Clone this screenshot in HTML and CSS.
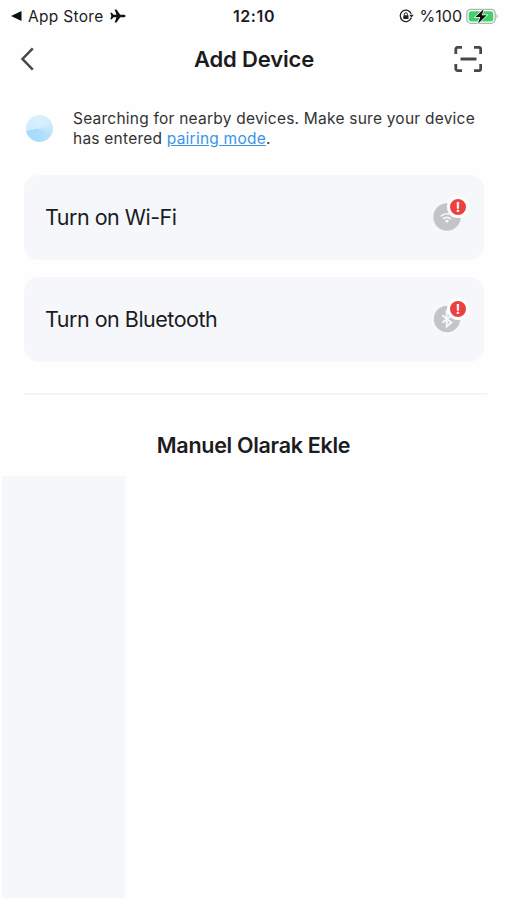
FILE: index.html
```html
<!DOCTYPE html>
<html lang="en">
<head>
    <meta charset="UTF-8">
    <meta name="viewport" content="width=device-width, initial-scale=1.0">
    <title>Add Device</title>
    <link rel="stylesheet" href="styles.css">
</head>
<body>

<div class="status-bar">
    <div class="status-left">
        <svg width="11" height="10" viewBox="0 0 11 10"><path d="M0 5L10.5 0v10z" fill="#111"/></svg>
        <span class="back-app">App Store</span>
        <svg class="plane" width="16" height="14" viewBox="0 0 16 14"><path d="M15.600 7c0-.8-1.200-1.300-2.200-1.300H10.200L6.500.6H4.700l1.800 5.100H3.500L1.900 3.700H.4l.9 3.300-.9 3.300h1.500l1.600-2h3l-1.800 5.100h1.800l3.700-5.100h3.200c1 0 2.200-.5 2.200-1.300z" fill="#111"/></svg>
    </div>
    <span class="time">12:10</span>
    <div class="status-right">
        <svg class="lock" width="15" height="14" viewBox="0 0 15 14">
            <path d="M12.300 8.800A5.700 5.700 0 1 1 12.300 4.900" fill="none" stroke="#222" stroke-width="1.300"/>
            <path d="M10.300 5.700h4.300l-2.100 3z" fill="#222"/>
            <rect x="4.300" y="6.200" width="5.200" height="3.900" rx=".6" fill="#222"/>
            <path d="M5.400 6.500V5.200a1.500 1.500 0 0 1 3 0v1.300" fill="none" stroke="#222"/>
        </svg>
        <span class="percent">%100</span>
        <svg width="33" height="17" viewBox="0 0 33 17">
            <rect x=".8" y="1.300" width="28.400" height="14" rx="4.300" fill="#fff" stroke="#b2b2b2" stroke-width="1.300"/>
            <rect x="2.700" y="3.200" width="24.600" height="10.200" rx="2.600" fill="#3fd268"/>
            <path d="M30.600 6.200c1.500.5 1.500 3.700 0 4.200z" fill="#aaa"/>
            <path d="M17.800 1L9.300 9.100h4.900L12 15.700l8.800-8.400h-5z" fill="#111" stroke="#fff" stroke-width="1.400" paint-order="stroke"/>
        </svg>
    </div>
</div>

<div class="header">
    <svg width="14" height="24" viewBox="0 0 14 24"><path d="M12.800 1.300L2.500 12l10.300 10.700" fill="none" stroke="#484848" stroke-width="2.500"/></svg>
    <h1>Add Device</h1>
    <svg width="28" height="26" viewBox="0 0 28 26">
        <path d="M1.800 8V3.300a2 2 0 0 1 2-2H8M20 1.300h4.700a2 2 0 0 1 2 2V8M26.700 18v4.700a2 2 0 0 1-2 2H20M8 24.700H3.800a2 2 0 0 1-2-2V18M6.500 13h16" fill="none" stroke="#484848" stroke-width="2.800"/>
    </svg>
</div>

<div class="notice">
    <div class="radar"></div>
    <p>Searching for nearby devices. Make sure your device<br>has entered <a href="#">pairing mode</a>.</p>
</div>

<div class="cards">
    <div class="card">
        <span>Turn on Wi-Fi</span>
        <div class="icon">
            <svg width="28" height="28" viewBox="0 0 28 28">
                <circle cx="14" cy="14" r="13.700" fill="#c3c4c7"/>
                <path d="M7.800 13.300a8.800 8.800 0 0 1 12.400 0M10.200 16a5.400 5.400 0 0 1 7.600 0" fill="none" stroke="#f5f7fb" stroke-width="1.700"/>
                <path d="M11.900 17.700a3 3 0 0 1 4.200 0L14 20z" fill="#f5f7fb"/>
            </svg>
            <span class="badge">!</span>
        </div>
    </div>
    <div class="card">
        <span>Turn on Bluetooth</span>
        <div class="icon">
            <svg width="28" height="28" viewBox="0 0 28 28">
                <circle cx="14" cy="14" r="13.200" fill="#c3c4c7"/>
                <path d="M9.300 10.300l9 7.300-4.600 4V6.400l4.600 4-9 7.300" fill="none" stroke="#f5f7fb" stroke-width="2"/>
            </svg>
            <span class="badge">!</span>
        </div>
    </div>
</div>

<div class="divider"></div>

<h2>Manuel Olarak Ekle</h2>
<div class="sidebar"></div>

</body>
</html>
```

FILE: styles.css
```css
* {
    box-sizing: border-box;
}
body {
    font-family: Inter, 'Liberation Sans', sans-serif;
    margin: 0;
    height: 900px;
    background: #fefefe;
    color: #1c1c1e;
    overflow: hidden;
}
svg {
    display: block;
    flex-shrink: 0;
}
.status-bar {
    display: grid;
    grid-template-columns: 1fr auto 1fr;
    align-items: center;
    height: 32px;
    padding: 0 8px 0 11px;
    font-size: 16px;
    white-space: nowrap;
}
.status-left, .status-right {
    display: flex;
    align-items: center;
}
.status-right {
    justify-content: flex-end;
}
.back-app {
    margin-left: 6px;
    font-size: 15.5px;
    letter-spacing: 0.3px;
}
.plane {
    margin-left: 6px;
}
.time {
    font-size: 16px;
    font-weight: 600;
    letter-spacing: 0.6px;
    margin-right: 2px;
}
.lock {
    margin-right: 6px;
}
.percent {
    margin-right: 4px;
}
.header {
    display: flex;
    align-items: center;
    justify-content: space-between;
    height: 54px;
    padding: 0 25px 0 20px;
}
h1 {
    margin: 0 0 0 20px;
    font-size: 22px;
    font-weight: 600;
    letter-spacing: -0.15px;
}
.notice {
    display: flex;
    align-items: center;
    height: 40px;
    margin: 23px 0 0 26px;
}
.notice p {
    margin: 0 0 0 20px;
    font-size: 15.5px;
    line-height: 20px;
    letter-spacing: 0.23px;
    color: #333;
    white-space: nowrap;
}
.notice a {
    color: #3b95e8;
}
.radar {
    width: 27px;
    height: 27px;
    margin-top: -1px;
    border-radius: 50%;
    background: conic-gradient(from 260deg, #cdeafe, #dbf0fe 90deg, #d2ecfe 160deg, #b5e0fd 230deg, #a3d9fc 358deg, #cdeafe);
}
.cards {
    display: flex;
    flex-direction: column;
    gap: 17px;
    margin: 26px 23px 0 24px;
}
.card {
    display: flex;
    align-items: center;
    justify-content: space-between;
    height: 85px;
    padding: 0 23px 2px 21px;
    border-radius: 15px;
    background: #f5f7fb;
    font-size: 21.5px;
    letter-spacing: -0.5px;
}
.icon {
    position: relative;
}
.badge {
    position: absolute;
    top: -7px;
    right: -8px;
    width: 22px;
    height: 22px;
    border: 3px solid #fff;
    border-radius: 50%;
    background: #ec3f40;
    color: #fff;
    font-size: 13px;
    font-weight: 700;
    line-height: 16px;
    letter-spacing: 0;
    text-align: center;
}
.divider {
    height: 2px;
    margin: 31px 20px 0 24px;
    background: #f3f4f6;
}
h2 {
    margin: 35px 0 0;
    font-size: 21.5px;
    font-weight: 600;
    line-height: 30px;
    letter-spacing: -0.3px;
    text-align: center;
}
.sidebar {
    width: 123px;
    height: 422px;
    margin: 16px 0 0 2px;
    background: #f5f7fb;
}
```
